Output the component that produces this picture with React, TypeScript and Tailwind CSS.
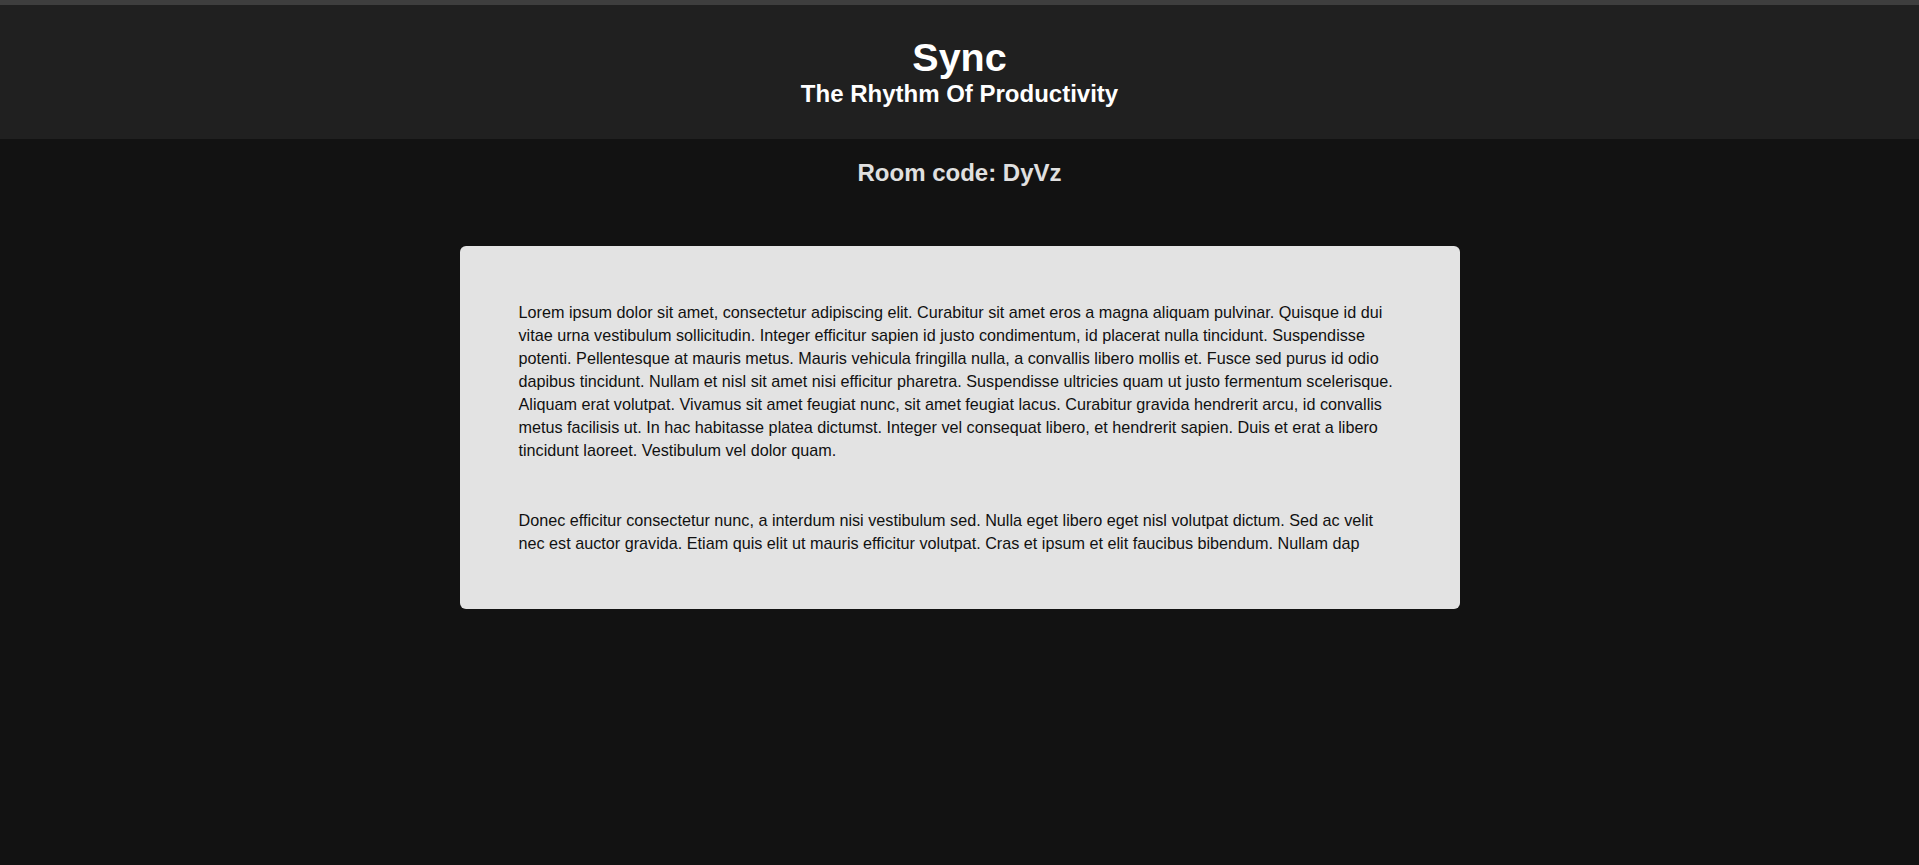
export default function App() {
  return (
    <div className="min-h-[865px] bg-[#121212] font-['Liberation_Sans',Arial,sans-serif]">
      <div className="h-[5px] bg-[#3e3e3e]" />
      <header className="bg-[#202020] pt-[33px] pb-[33px] text-center text-white">
        <h1 className="text-[39.5px] leading-[38px] font-bold">Sync</h1>
        <h2 className="mt-[6px] text-[24px] leading-[24px] font-bold">The Rhythm Of Productivity</h2>
      </header>
      <div className="mt-[22px] text-center text-[24px] leading-[24px] font-bold text-[#e0e0e0]">
        Room code: DyVz
      </div>
      <div className="mx-auto mt-[61px] w-[1000px] rounded-[6px] bg-[#e3e3e3] pt-[55px] pb-[54px] px-[59px] text-[16.2px] leading-[23px] text-[#111111]">
        <p>
          Lorem ipsum dolor sit amet, consectetur adipiscing elit. Curabitur sit amet eros a magna aliquam pulvinar. Quisque id dui vitae urna vestibulum sollicitudin. Integer efficitur sapien id justo condimentum, id placerat nulla tincidunt. Suspendisse potenti. Pellentesque at mauris metus. Mauris vehicula fringilla nulla, a convallis libero mollis et. Fusce sed purus id odio dapibus tincidunt. Nullam et nisl sit amet nisi efficitur pharetra. Suspendisse ultricies quam ut justo fermentum scelerisque. Aliquam erat volutpat. Vivamus sit amet feugiat nunc, sit amet feugiat lacus. Curabitur gravida hendrerit arcu, id convallis metus facilisis ut. In hac habitasse platea dictumst. Integer vel consequat libero, et hendrerit sapien. Duis et erat a libero tincidunt laoreet. Vestibulum vel dolor quam.
        </p>
        <p className="mt-[47px]">
          Donec efficitur consectetur nunc, a interdum nisi vestibulum sed. Nulla eget libero eget nisl volutpat dictum. Sed ac velit nec est auctor gravida. Etiam quis elit ut mauris efficitur volutpat. Cras et ipsum et elit faucibus bibendum. Nullam dap
        </p>
      </div>
    </div>
  );
}
